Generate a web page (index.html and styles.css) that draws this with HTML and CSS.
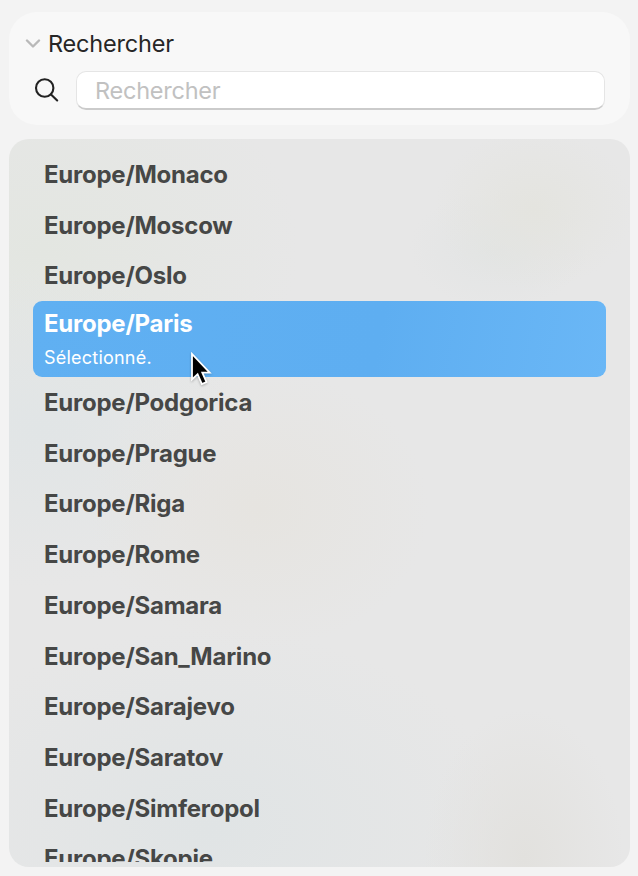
FILE: index.html
```html
<!DOCTYPE html>
<html lang="fr">
<head>
<meta charset="utf-8">
<title>Rechercher</title>
<link rel="stylesheet" href="styles.css">
</head>
<body>
<section class="search">
  <div class="heading">
    <svg class="chevron" viewBox="0 0 16 10"><path d="M2 1.500l6 6 6-6"/></svg>
    <span>Rechercher</span>
  </div>
  <div class="row">
    <svg class="lens" viewBox="0 0 24 24"><circle cx="9.700" cy="9" r="8.700"/><path d="M16 15.400l6.200 6"/></svg>
    <input class="field" type="text" placeholder="Rechercher">
  </div>
</section>
<section class="panel">
  <ul class="list">
    <li><b>Europe/Monaco</b></li>
    <li><b>Europe/Moscow</b></li>
    <li><b>Europe/Oslo</b></li>
    <li class="selected"><b>Europe/Paris</b><small>Sélectionné.</small>
      <svg class="cursor" viewBox="0 0 22 34"><path d="M2 2v25.500l5.600-5.200 4.300 9.800 4.600-2-4.200-9.500h7.400z"/></svg>
    </li>
    <li><b>Europe/Podgorica</b></li>
    <li><b>Europe/Prague</b></li>
    <li><b>Europe/Riga</b></li>
    <li><b>Europe/Rome</b></li>
    <li><b>Europe/Samara</b></li>
    <li><b>Europe/San_Marino</b></li>
    <li><b>Europe/Sarajevo</b></li>
    <li><b>Europe/Saratov</b></li>
    <li><b>Europe/Simferopol</b></li>
    <li><b>Europe/Skopje</b></li>
  </ul>
</section>
</body>
</html>
```
FILE: styles.css
```css
* { box-sizing: border-box; }
body {
  margin: 0;
  height: 876px;
  padding: 12px 8px 9px 9px;
  display: flex;
  flex-direction: column;
  gap: 14px;
  overflow: hidden;
  background: #f3f3f3;
  color: #464746;
  font-family: Inter, sans-serif;
}
.search {
  flex: none;
  height: 113px;
  padding: 16px 25px 0 16px;
  border-radius: 28px;
  background: #f8f8f8;
}
.heading {
  display: flex;
  align-items: center;
  gap: 7px;
  height: 31px;
  font-size: 23.5px;
  letter-spacing: -0.2px;
  color: #262626;
}
.chevron { width: 16px; height: 10px; fill: none; stroke: #b9b9b9; stroke-width: 2.4; stroke-linecap: round; stroke-linejoin: round; }
.row { display: flex; align-items: center; gap: 17px; padding: 12px 0 0 10px; }
.lens { width: 24px; height: 24px; fill: none; stroke: #222; stroke-width: 2.1; stroke-linecap: round; overflow: visible; }
.field {
  flex: 1;
  height: 39px;
  padding: 1px 18px 0;
  border: 1px solid #e5e5e5;
  border-bottom: 2px solid #cbcbcb;
  border-radius: 10px;
  background: #fff;
  font: 23.5px Inter, sans-serif;
  letter-spacing: -0.25px;
}
.field::placeholder { color: #c1c1c1; opacity: 1; }
.panel {
  flex: 1;
  min-height: 0;
  padding: 10px 24px 5px 24px;
  border-radius: 20px;
  background:
    radial-gradient(ellipse 100px 80px at 525px 70px, #e4e4df, transparent),
    radial-gradient(ellipse 90px 60px at 490px 110px, #e2e4e4, transparent),
    radial-gradient(ellipse 170px 140px at 250px 370px, #e6e4e0, transparent),
    radial-gradient(ellipse 100px 150px at 515px 720px, #e2e1de, transparent),
    radial-gradient(ellipse 300px 200px at 200px 690px, #e0e4e5, transparent),
    radial-gradient(ellipse 200px 160px at 30px 290px, #e1e5e6, transparent),
    radial-gradient(ellipse 260px 200px at 30px 110px, #e3e6e1, transparent),
    #e7e7e7;
}
.list { height: 100%; margin: 0; padding: 1px 0 0; overflow: hidden; list-style: none; }
.list li { height: 50.7px; padding: 0 11px; line-height: 50.7px; font-size: 24px; letter-spacing: -0.24px; }
.list b { font-weight: 700; display: block; }
.list .selected {
  position: relative;
  height: 76px;
  margin: -1.100px 0 1.100px;
  padding-top: 7px;
  border-radius: 9px;
  background: linear-gradient(100deg, #60b0f2, #5eaef1 60%, #6ab7f6);
  color: #fff;
}
.list .selected b { line-height: 32px; }
.selected small { display: block; font-size: 18px; line-height: 36px; letter-spacing: 0.22px; }
.cursor { position: absolute; left: 157px; top: 51px; width: 22px; height: 34px; fill: #000; stroke: #fff; stroke-width: 1.8; filter: drop-shadow(0 1px 1px rgba(0, 0, 0, 0.25)); }
```
